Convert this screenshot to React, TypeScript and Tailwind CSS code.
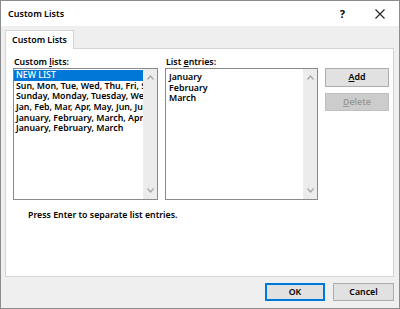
import React from "react";

function Chevron({ up }: { up?: boolean }) {
  return (
    <svg width="7" height="5" viewBox="0 0 7 5" className="block">
      <path
        d={up ? "M0.5 4.5 L3.5 1 L6.5 4.5" : "M0.5 0.5 L3.5 4 L6.5 0.5"}
        fill="none"
        stroke="#a6a6a6"
        strokeWidth="1.2"
      />
    </svg>
  );
}

function Scrollbar() {
  return (
    <div className="w-[14px] h-full bg-[#ececec] flex flex-col items-center justify-between py-[6px] shrink-0">
      <Chevron up />
      <Chevron />
    </div>
  );
}

export default function App() {
  const lists = [
    "NEW LIST",
    "Sun, Mon, Tue, Wed, Thu, Fri, Sat",
    "Sunday, Monday, Tuesday, Wednesday, Thursday",
    "Jan, Feb, Mar, Apr, May, Jun, Jul, Aug",
    "January, February, March, April, May",
    "January, February, March",
  ];
  const entries = ["January", "February", "March"];
  return (
    <div className="w-[400px] h-[309px] border border-[#8c8c8c] flex flex-col bg-[#efefef] font-['Noto_Sans',sans-serif] text-black overflow-hidden text-[8.8px] font-semibold">
      <div className="h-[25px] bg-white flex items-center pl-[7px] shrink-0">
        <span className="text-[9px] leading-none">Custom Lists</span>
        <span className="ml-auto text-[11px] font-bold leading-none mr-[30px]">?</span>
        <svg width="10" height="10" viewBox="0 0 10 10" className="mr-[14px]">
          <path d="M0.5 0.5 L9.5 9.5 M9.5 0.5 L0.5 9.5" stroke="#222" strokeWidth="1.1" />
        </svg>
      </div>
      <div className="flex-1 flex flex-col pl-[4px] pt-[4px]">
        <div className="flex">
          <div className="h-[19px] w-[69px] bg-white border border-[#d4d4d4] border-b-0 flex items-center justify-center leading-none relative z-10">
            Custom Lists
          </div>
        </div>
        <div className="w-[389px] h-[229px] bg-white border border-[#d4d4d4] -mt-px pl-[7px] pt-[8px] flex flex-col">
          <div className="flex gap-[7px]">
            <div className="flex flex-col w-[145px]">
              <div className="leading-[10px] h-[10px] pl-[1px]">
                Custom <span className="underline">l</span>ists:
              </div>
              <div className="mt-[1px] h-[132px] border border-[#8a8a8a] flex">
                <div className="flex-1 min-w-0 pt-[1px] overflow-hidden">
                  {lists.map((l, i) => (
                    <div
                      key={i}
                      className={
                        "h-[10.67px] leading-[10.67px] whitespace-nowrap pl-[2px] overflow-hidden " +
                        (i === 0 ? "bg-[#0078d7] text-white font-medium" : "")
                      }
                    >
                      {l}
                    </div>
                  ))}
                </div>
                <Scrollbar />
              </div>
            </div>
            <div className="flex flex-col w-[153px]">
              <div className="leading-[10px] h-[10px] pl-[1px]">
                List <span className="underline">e</span>ntries:
              </div>
              <div className="mt-[1px] h-[132px] border border-[#8a8a8a] flex">
                <div className="flex-1 min-w-0 pt-[3px] pl-[3px]">
                  {entries.map((e) => (
                    <div key={e} className="h-[10.67px] leading-[10.67px]">
                      {e}
                    </div>
                  ))}
                </div>
                <Scrollbar />
              </div>
            </div>
            <div className="flex flex-col gap-[6px] pt-[11px]">
              <div className="w-[64px] h-[19px] bg-[#e1e1e1] border border-[#adadad] flex items-center justify-center leading-none">
                <span>
                  <span className="underline">A</span>dd
                </span>
              </div>
              <div className="w-[64px] h-[18px] bg-[#cccccc] border border-[#bfbfbf] flex items-center justify-center leading-none text-[#9a9a9a]">
                <span>
                  <span className="underline">D</span>elete
                </span>
              </div>
            </div>
          </div>
          <div className="mt-[10px] pl-[15px] leading-[10px]">
            Press Enter to separate list entries.
          </div>
        </div>
        <div className="flex justify-end gap-[8px] pr-[5px] mt-[6px]">
          <div className="w-[60px] h-[18px] bg-[#e1e1e1] border-2 border-[#0078d7] flex items-center justify-center leading-none">
            OK
          </div>
          <div className="w-[61px] h-[18px] bg-[#e1e1e1] border border-[#adadad] flex items-center justify-center leading-none">
            Cancel
          </div>
        </div>
      </div>
    </div>
  );
}
